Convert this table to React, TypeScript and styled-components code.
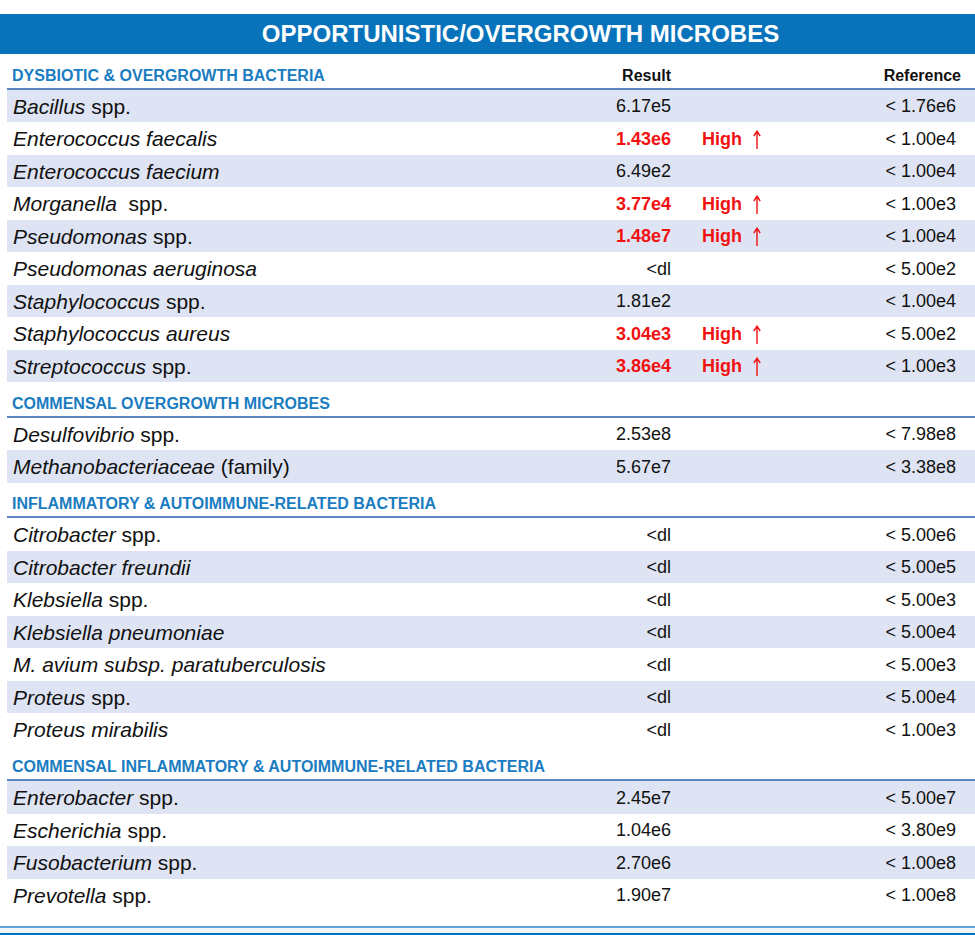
import React from "react";
import styled, { createGlobalStyle } from "styled-components";

const GlobalStyle = createGlobalStyle`
  body {
    margin: 0;
    background: #fff;
    font-family: "Liberation Sans", Arial, sans-serif;
    color: #111;
  }
`;

type Microbe = {
  genus: string;
  rest?: string;
  result: string;
  high?: boolean;
  reference: string;
};

type Section = {
  title: string;
  shadeFirst: boolean;
  showColumns?: boolean;
  rows: Microbe[];
};

const sections: Section[] = [
  {
    title: "DYSBIOTIC & OVERGROWTH BACTERIA",
    shadeFirst: true,
    showColumns: true,
    rows: [
      { genus: "Bacillus", rest: " spp.", result: "6.17e5", reference: "< 1.76e6" },
      { genus: "Enterococcus faecalis", result: "1.43e6", high: true, reference: "< 1.00e4" },
      { genus: "Enterococcus faecium", result: "6.49e2", reference: "< 1.00e4" },
      { genus: "Morganella", rest: "  spp.", result: "3.77e4", high: true, reference: "< 1.00e3" },
      { genus: "Pseudomonas", rest: " spp.", result: "1.48e7", high: true, reference: "< 1.00e4" },
      { genus: "Pseudomonas aeruginosa", result: "<dl", reference: "< 5.00e2" },
      { genus: "Staphylococcus", rest: " spp.", result: "1.81e2", reference: "< 1.00e4" },
      { genus: "Staphylococcus aureus", result: "3.04e3", high: true, reference: "< 5.00e2" },
      { genus: "Streptococcus", rest: " spp.", result: "3.86e4", high: true, reference: "< 1.00e3" },
    ],
  },
  {
    title: "COMMENSAL OVERGROWTH MICROBES",
    shadeFirst: false,
    rows: [
      { genus: "Desulfovibrio", rest: " spp.", result: "2.53e8", reference: "< 7.98e8" },
      { genus: "Methanobacteriaceae", rest: " (family)", result: "5.67e7", reference: "< 3.38e8" },
    ],
  },
  {
    title: "INFLAMMATORY & AUTOIMMUNE-RELATED BACTERIA",
    shadeFirst: false,
    rows: [
      { genus: "Citrobacter", rest: " spp.", result: "<dl", reference: "< 5.00e6" },
      { genus: "Citrobacter freundii", result: "<dl", reference: "< 5.00e5" },
      { genus: "Klebsiella", rest: " spp.", result: "<dl", reference: "< 5.00e3" },
      { genus: "Klebsiella pneumoniae", result: "<dl", reference: "< 5.00e4" },
      { genus: "M. avium subsp. paratuberculosis", result: "<dl", reference: "< 5.00e3" },
      { genus: "Proteus", rest: " spp.", result: "<dl", reference: "< 5.00e4" },
      { genus: "Proteus mirabilis", result: "<dl", reference: "< 1.00e3" },
    ],
  },
  {
    title: "COMMENSAL INFLAMMATORY & AUTOIMMUNE-RELATED BACTERIA",
    shadeFirst: true,
    rows: [
      { genus: "Enterobacter", rest: " spp.", result: "2.45e7", reference: "< 5.00e7" },
      { genus: "Escherichia", rest: " spp.", result: "1.04e6", reference: "< 3.80e9" },
      { genus: "Fusobacterium", rest: " spp.", result: "2.70e6", reference: "< 1.00e8" },
      { genus: "Prevotella", rest: " spp.", result: "1.90e7", reference: "< 1.00e8" },
    ],
  },
];

const Page = styled.div`
  padding-top: 14px;
`;

const TitleBand = styled.h1`
  margin: 0;
  height: 40px;
  background: #0873bb;
  color: #fff;
  font-size: 24px;
  font-weight: bold;
  display: flex;
  align-items: center;
  justify-content: center;
  padding-left: 66px;
`;

const Table = styled.div`
  margin-left: 7px;
`;

const columns = `
  display: grid;
  grid-template-columns: 1fr 150px 135px 150px;
  padding-right: 19px;
`;

const SectionHead = styled.div`
  ${columns}
  height: 35.5px;
  box-sizing: border-box;
  align-items: end;
  padding-bottom: 3px;
  border-bottom: 2px solid #5a86bf;
`;

const SectionTitle = styled.h2`
  margin: 0;
  padding-left: 5px;
  font-size: 16px;
  font-weight: bold;
  color: #1a7cc1;
  white-space: nowrap;
`;

const ColumnLabel = styled.span<{ $shift?: number }>`
  text-align: right;
  font-size: 16px;
  font-weight: bold;
  color: #111;
  margin-right: ${(p) => -(p.$shift || 0)}px;
`;

const Row = styled.div<{ $shaded: boolean }>`
  ${columns}
  height: 32.5px;
  align-items: center;
  background: ${(p) => (p.$shaded ? "#dee4f3" : "#fff")};
`;

const Name = styled.span`
  padding-left: 6px;
  padding-top: 2px;
  font-size: 21px;
  white-space: pre;
  em {
    font-style: italic;
  }
`;

const Value = styled.span<{ $high?: boolean }>`
  text-align: right;
  padding-top: 2px;
  font-size: 18px;
  font-weight: ${(p) => (p.$high ? "bold" : "normal")};
  color: ${(p) => (p.$high ? "#f21111" : "#111")};
`;

const Flag = styled.span`
  display: flex;
  align-items: center;
  gap: 11px;
  padding-left: 31px;
  padding-top: 2px;
  font-size: 18px;
  font-weight: bold;
  color: #f21111;
`;

const UpArrow = () => (
  <svg width="8" height="19" viewBox="0 0 8 19" aria-hidden="true">
    <path d="M4 1.5V19M0.8 6L4 1.2L7.2 6" stroke="#f21111" strokeWidth="1.4" fill="none" />
  </svg>
);

const Footer = styled.div`
  margin-top: 15px;
  height: 5px;
  border-top: 2px solid #5fa4d8;
  border-bottom: 2px solid #0873bb;
  background: #eef5fb;
`;

export default function App() {
  return (
    <Page>
      <GlobalStyle />
      <TitleBand>OPPORTUNISTIC/OVERGROWTH MICROBES</TitleBand>
      <Table>
        {sections.map((section) => (
          <React.Fragment key={section.title}>
            <SectionHead>
              <SectionTitle>{section.title}</SectionTitle>
              {section.showColumns ? (
                <>
                  <ColumnLabel>Result</ColumnLabel>
                  <span />
                  <ColumnLabel $shift={5}>Reference</ColumnLabel>
                </>
              ) : null}
            </SectionHead>
            {section.rows.map((row, i) => (
              <Row key={row.genus} $shaded={section.shadeFirst ? i % 2 === 0 : i % 2 === 1}>
                <Name>
                  <em>{row.genus}</em>
                  {row.rest}
                </Name>
                <Value $high={row.high}>{row.result}</Value>
                <Flag>
                  {row.high ? (
                    <>
                      High
                      <UpArrow />
                    </>
                  ) : null}
                </Flag>
                <Value>{row.reference}</Value>
              </Row>
            ))}
          </React.Fragment>
        ))}
      </Table>
      <Footer />
    </Page>
  );
}
